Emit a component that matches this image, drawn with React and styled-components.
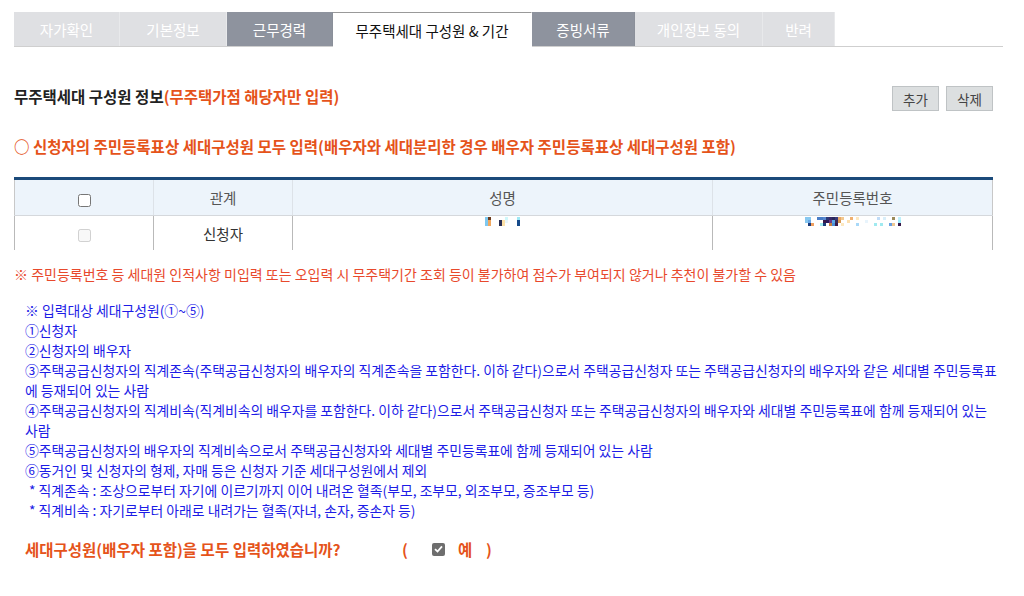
import React from 'react';
import styled, { createGlobalStyle } from 'styled-components';

const GlobalStyle = createGlobalStyle`
  body {
    margin: 0;
    background: #fff;
    font-family: "Noto Sans CJK KR", "Noto Sans", sans-serif;
    color: #222;
  }
`

const Page = styled.div`
  padding: 12px 21px 0 14px;
`

const TabBar = styled.div`
  display: flex;
  height: 34px;
  border-bottom: 1px solid #cfcfcf;
`

const Tab = styled.div`
  width: ${p => p.w}px;
  display: flex;
  align-items: center;
  justify-content: center;
  font-size: 14.5px;
  box-sizing: border-box;
  background: ${p => p.kind === 'active' ? '#fff' : p.kind === 'dark' ? '#8e939e' : '#dfe0e3'};
  color: ${p => p.kind === 'active' ? '#111' : '#fff'};
  border-top: ${p => p.kind === 'active' ? '1px solid #999' : 'none'};
  border-right: 1px solid ${p => p.kind === 'light' ? '#e8e9eb' : p.kind === 'dark' ? '#8a8f99' : '#fff'};
  margin-bottom: ${p => p.kind === 'active' ? '-1px' : '0'};
`

const HeadRow = styled.div`
  display: flex;
  justify-content: space-between;
  align-items: flex-start;
  margin-top: 39px;
  padding-right: 10px;
`

const Title = styled.h2`
  margin: 0;
  font-size: 15.5px;
  line-height: 20px;
  font-weight: 700;
  color: #222;
`

const Orange = styled.span`
  color: #e5531a;
`

const Buttons = styled.div`
  display: flex;
  gap: 7px;
`

const SmallButton = styled.button`
  width: 47px;
  height: 25px;
  padding: 0;
  background: #dcdfe0;
  border: 1px solid #bfc3c5;
  color: #444;
  font-family: inherit;
  font-size: 13.5px;
`

const Notice = styled.p`
  margin: 24px 0 0;
  font-size: 15.5px;
  font-weight: 700;
  color: #e5531a;
  line-height: 22px;
`

const Table = styled.table`
  margin-top: 20px;
  width: 979px;
  border-collapse: collapse;
  border-top: 3px solid #1b4a7a;
  table-layout: fixed;
  font-size: 14.5px;
`

const Th = styled.th`
  height: 35px;
  padding: 0;
  background: #edf4fb;
  color: #555;
  font-weight: 400;
  border-left: 1px solid #dde2e8;
  border-bottom: 1px solid #d5d8dc;
  &:first-child { border-left: 1px solid #c8c8c8; }
  &:last-child { border-right: 1px solid #c8c8c8; }
`

const Td = styled.td`
  height: 34px;
  padding: 0;
  text-align: center;
  color: #333;
  border-left: 1px solid #b9b9b9;
  &:last-child { border-right: 1px solid #b9b9b9; }
`

const Check = styled.input`
  width: 13px;
  height: 13px;
  margin: 0;
  vertical-align: middle;
`

const Blur = styled.svg`
  display: inline-block;
  vertical-align: top;
  margin-top: -6px;
`

const Warn = styled.p`
  margin: 15px 0 0;
  font-size: 14px;
  color: #e8492c;
  line-height: 18px;
`

const Guide = styled.div`
  margin-top: 17px;
  padding: 0 4px 0 11px;
  font-size: 13.85px;
  line-height: 20px;
  color: #1c1ce6;
`

const GuideLine = styled.div`
  padding-left: ${p => p.indent ? 4 : 0}px;
`

const Question = styled.div`
  display: flex;
  align-items: center;
  margin-top: 18px;
  padding-left: 11px;
  font-size: 15.5px;
  font-weight: 700;
  color: #e5531a;
`

const QText = styled.span`
  width: 377px;
`

const Paren = styled.span`
  width: ${p => p.w}px;
`

const CheckedBox = styled.span`
  width: 13px;
  height: 13px;
  border-radius: 2px;
  background: #6e6e6e;
  display: inline-flex;
  align-items: center;
  justify-content: center;
  margin-right: 13px;
`

const tabs = [
  { label: '자가확인', w: 106, kind: 'light' },
  { label: '기본정보', w: 107, kind: 'light' },
  { label: '근무경력', w: 106, kind: 'dark' },
  { label: '무주택세대 구성원 & 기간', w: 199, kind: 'active' },
  { label: '증빙서류', w: 103, kind: 'dark' },
  { label: '개인정보 동의', w: 128, kind: 'light' },
  { label: '반려', w: 72, kind: 'light' },
];

const nameBlur = [
  [0, 0, '#7ec8ef'], [3, 0, '#6b3a1c'], [0, 3, '#7ec8ef'], [3, 3, '#f0a860'], [3, 6, '#f0a860'], [0, 6, '#7ec8ef'],
  [14, 3, '#2a2f55'], [14, 6, '#2a2f55'], [17, 3, '#fde1a8'], [17, 6, '#fde1a8'], [20, 0, '#cff8fb'], [20, 3, '#e8f6fb'],
  [32, 0, '#9ee8f5'], [32, 3, '#164a8a'], [32, 6, '#164a8a'],
];

const rrnBlur = [
  [0, 0, '#88c8f0'], [3, 0, '#88c8f0'], [12, 0, '#4a7ec8'], [15, 0, '#4a7ec8'], [18, 0, '#5a8ad0'], [21, 0, '#2c3a78'],
  [24, 0, '#3a2a6a'], [27, 0, '#2a2a5a'], [30, 0, '#3a3a7a'], [33, 0, '#e8a868'], [36, 0, '#f2c890'], [45, 0, '#f0b070'],
  [51, 0, '#fde8c0'], [72, 0, '#c0dcf8'], [78, 0, '#d8eefa'], [87, 0, '#9a8a5a'], [93, 0, '#c0f0fb'],
  [0, 3, '#88c8f0'], [3, 3, '#6aa8e8'], [18, 3, '#3a1a4a'], [21, 3, '#2a1a5a'], [24, 3, '#6a3a8a'], [27, 3, '#5aa8e8'],
  [30, 3, '#3a2a5a'], [33, 3, '#d89850'], [42, 3, '#fde0b0'], [60, 3, '#e8f4fc'], [93, 3, '#a0eaf8'],
  [3, 6, '#1a3a7a'], [6, 6, '#f0a060'], [15, 6, '#a0ecf0'], [18, 6, '#1a3a7a'], [24, 6, '#c88040'], [27, 6, '#4a90d8'],
  [30, 6, '#3a1a4a'], [36, 6, '#fde8c0'], [51, 6, '#a8d8f8'], [69, 6, '#a0eaf0'], [75, 6, '#a0eaf0'], [84, 6, '#6aa0e0'],
  [87, 6, '#f0c890'], [93, 6, '#3a1a4a'],
];

const PixelBlur = ({ cells, width }) => (
  <Blur width={width} height={10} viewBox={`0 0 ${width} 10`}>
    {cells.map(([x, y, c], i) => (
      <rect key={i} x={x} y={y} width={3} height={3} fill={c} />
    ))}
  </Blur>
);

const App = () => {
  return (
    <Page>
      <GlobalStyle />
      <TabBar>
        {tabs.map(t => (
          <Tab key={t.label} w={t.w} kind={t.kind}>{t.label}</Tab>
        ))}
      </TabBar>

      <HeadRow>
        <Title>무주택세대 구성원 정보<Orange>(무주택가점 해당자만 입력)</Orange></Title>
        <Buttons>
          <SmallButton>추가</SmallButton>
          <SmallButton>삭제</SmallButton>
        </Buttons>
      </HeadRow>

      <Notice>○ 신청자의 주민등록표상 세대구성원 모두 입력(배우자와 세대분리한 경우 배우자 주민등록표상 세대구성원 포함)</Notice>

      <Table>
        <colgroup>
          <col style={{ width: 139 }} />
          <col style={{ width: 139 }} />
          <col style={{ width: 420 }} />
          <col />
        </colgroup>
        <thead>
          <tr>
            <Th><Check type="checkbox" readOnly /></Th>
            <Th>관계</Th>
            <Th>성명</Th>
            <Th>주민등록번호</Th>
          </tr>
        </thead>
        <tbody>
          <tr>
            <Td><Check type="checkbox" disabled /></Td>
            <Td>신청자</Td>
            <Td><PixelBlur cells={nameBlur} width={36} /></Td>
            <Td><PixelBlur cells={rrnBlur} width={96} /></Td>
          </tr>
        </tbody>
      </Table>

      <Warn>※ 주민등록번호 등 세대원 인적사항 미입력 또는 오입력 시 무주택기간 조회 등이 불가하여 점수가 부여되지 않거나 추천이 불가할 수 있음</Warn>

      <Guide>
        <GuideLine>※ 입력대상 세대구성원(①~⑤)</GuideLine>
        <GuideLine>①신청자</GuideLine>
        <GuideLine>②신청자의 배우자</GuideLine>
        <GuideLine>③주택공급신청자의 직계존속(주택공급신청자의 배우자의 직계존속을 포함한다. 이하 같다)으로서 주택공급신청자 또는 주택공급신청자의 배우자와 같은 세대별 주민등록표에 등재되어 있는 사람</GuideLine>
        <GuideLine>④주택공급신청자의 직계비속(직계비속의 배우자를 포함한다. 이하 같다)으로서 주택공급신청자 또는 주택공급신청자의 배우자와 세대별 주민등록표에 함께 등재되어 있는 사람</GuideLine>
        <GuideLine>⑤주택공급신청자의 배우자의 직계비속으로서 주택공급신청자와 세대별 주민등록표에 함께 등재되어 있는 사람</GuideLine>
        <GuideLine>⑥동거인 및 신청자의 형제, 자매 등은 신청자 기준 세대구성원에서 제외</GuideLine>
        <GuideLine indent>* 직계존속 : 조상으로부터 자기에 이르기까지 이어 내려온 혈족(부모, 조부모, 외조부모, 증조부모 등)</GuideLine>
        <GuideLine indent>* 직계비속 : 자기로부터 아래로 내려가는 혈족(자녀, 손자, 증손자 등)</GuideLine>
      </Guide>

      <Question>
        <QText>세대구성원(배우자 포함)을 모두 입력하였습니까?</QText>
        <Paren w={30}>(</Paren>
        <CheckedBox>
          <svg width="9" height="8" viewBox="0 0 9 8">
            <path d="M1 4.2 L3.5 6.5 L8 1.3" stroke="#fff" strokeWidth="1.8" fill="none" />
          </svg>
        </CheckedBox>
        <Paren w={28}>예</Paren>
        <span>)</span>
      </Question>
    </Page>
  );
}

export default App;
